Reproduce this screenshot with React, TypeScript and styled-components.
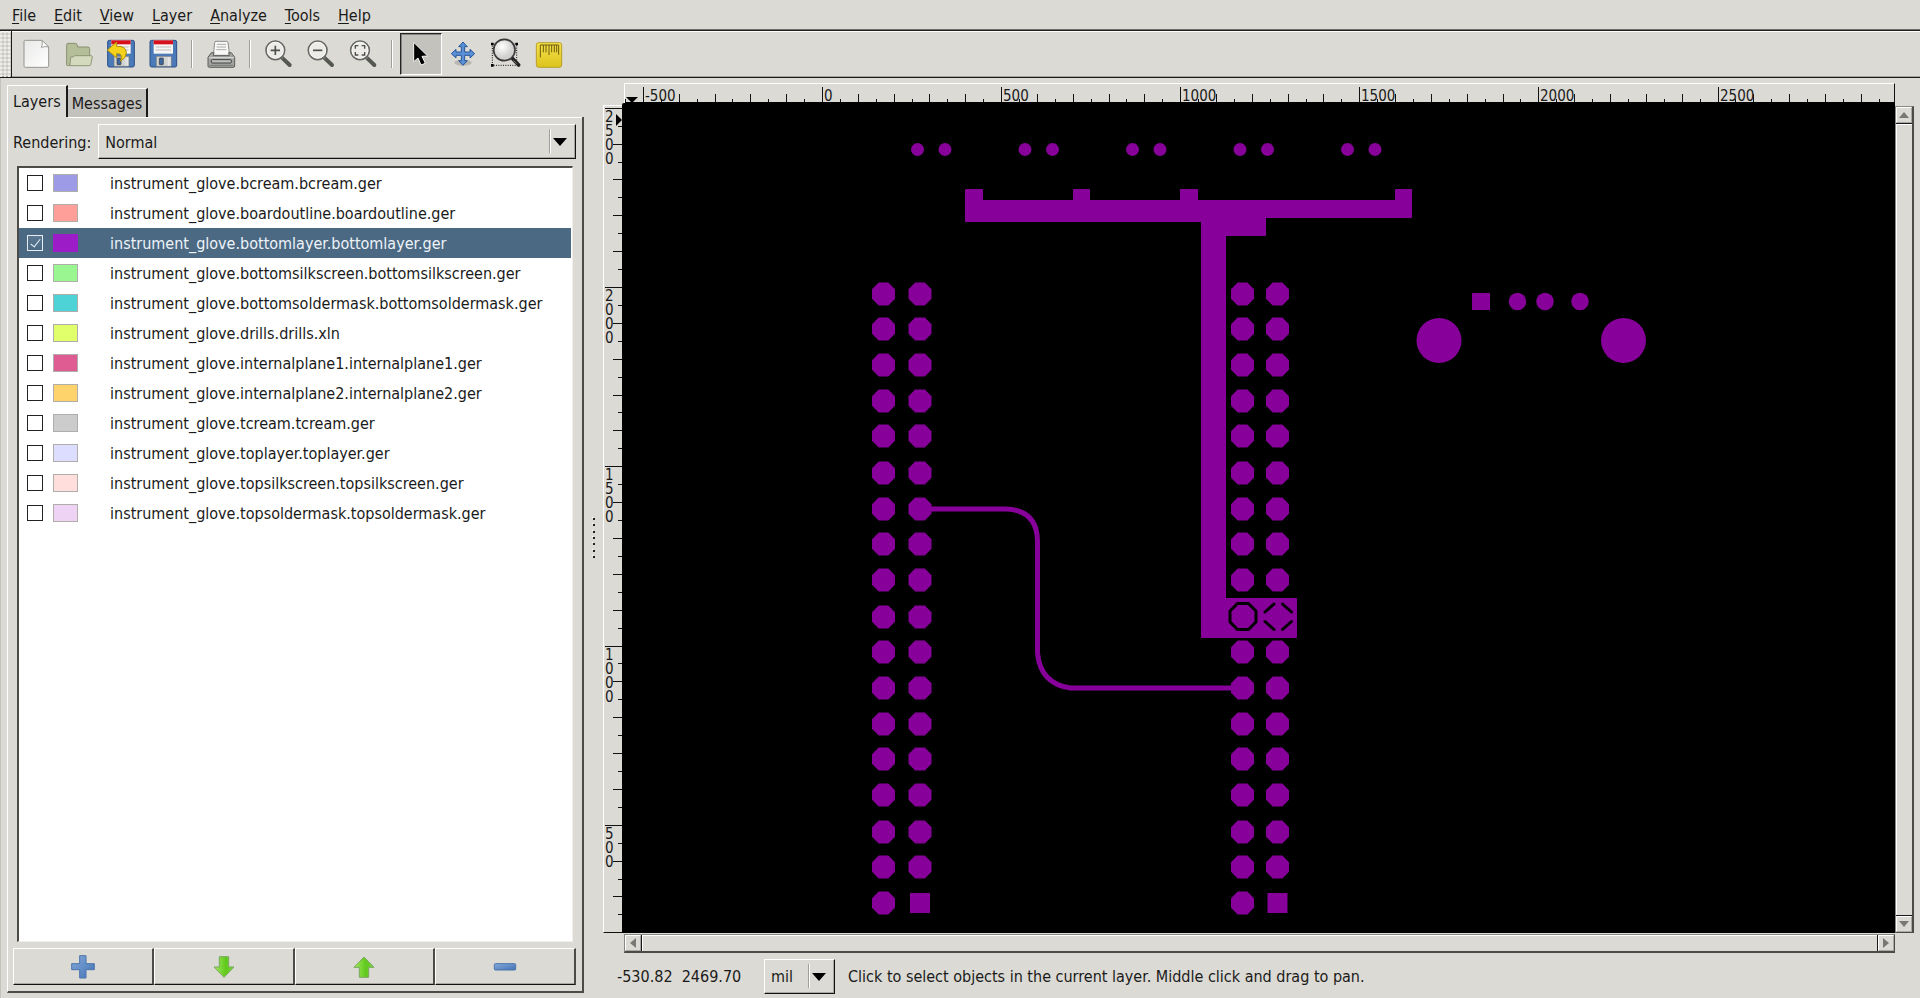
import React, { useState } from "react";
import styled, { createGlobalStyle, css } from "styled-components";

const face = "#dcdad5";
const shade = "#c4c2bd";
const edge = "#4c4b48";
const copper = "#860099";

const GlobalStyle = createGlobalStyle`
  * { box-sizing: border-box; }
  body {
    margin: 0;
    background: ${face};
    color: #1a1a1a;
    font: 16px/20px "DejaVu Sans Condensed", "DejaVu Sans", sans-serif;
  }
  button, select, input { font: inherit; color: inherit; margin: 0; padding: 0; }
`;

const raised = css`
  border: 1px solid;
  border-color: #fff #111 #111 #fff;
  box-shadow: inset -1px -1px 0 #a9a7a2;
  background: ${face};
`;

const Window = styled.div`
  display: flex;
  flex-direction: column;
  min-height: 100vh;
`;

const MenuBar = styled.nav`
  display: flex;
  height: 30px;
  padding: 2px 3px 0;
  align-items: center;
  border-bottom: 1px solid #6e6c69;
`;

const MenuItem = styled.button`
  border: 0;
  background: none;
  padding: 0 9px;
  span { text-decoration: underline; text-underline-offset: 2px; }
`;

const ToolBar = styled.div`
  display: flex;
  height: 48px;
  border-top: 1px solid #22211f;
  border-bottom: 1px solid #1a1a1a;
  box-shadow: inset 0 1px 0 #fff, inset 0 -1px 0 #a5a39e;
  align-items: center;
`;

const Handle = styled.div`
  width: 12px;
  align-self: stretch;
  margin-right: 4px;
  border-right: 1px solid #1a1a1a;
  background-image: radial-gradient(circle at 1px 1px, #efeeec 1px, transparent 1px),
    radial-gradient(circle at 3px 3px, #cbc9c4 1px, transparent 1px);
  background-size: 4px 4px;
`;

const ToolButton = styled.button<{ $pressed?: boolean }>`
  width: 42px;
  height: 42px;
  border: 1px solid transparent;
  background: none;
  ${(p) =>
    p.$pressed &&
    css`
      background: ${shade};
      border: 1px solid;
      border-color: #222 #fff #fff #222;
      box-shadow: inset 1px 1px 0 #85837f;
    `}
  svg { display: block; margin: -1px; width: 42px; height: 42px; }
`;

const ToolGap = styled.div`
  width: 16px;
  height: 28px;
  display: flex;
  justify-content: center;
  &::before {
    content: "";
    width: 2px;
    background: linear-gradient(90deg, #a19f9a 50%, #fff 50%);
  }
`;

const Main = styled.main`
  display: flex;
  flex: 1;
`;

const Sidebar = styled.section`
  display: flex;
  flex-direction: column;
  width: 584px;
  flex: none;
  padding: 7px 0 5px 6px;
  border-left: 1px solid ${shade};
`;

const Tabs = styled.div`
  display: flex;
  height: 32px;
  align-items: flex-end;
`;

const Tab = styled.button<{ $active?: boolean }>`
  border: 0;
  border-top: 1px solid #fff;
  border-right: 2px solid #1a1a1a;
  height: 29px;
  padding: 2px 4px 0;
  background: ${shade};
  ${(p) =>
    p.$active &&
    css`
      height: 32px;
      padding: 0 5px;
      border-left: 1px solid #fff;
      background: ${face};
    `}
`;

const Page = styled.div`
  flex: 1;
  display: flex;
  flex-direction: column;
  padding: 7px 6px 6px 5px;
  border-left: 1px solid #fff;
  border-right: 2px solid ${edge};
  border-bottom: 2px solid ${edge};
  background: linear-gradient(#fff, #fff) no-repeat right top / calc(100% - 60px) 1px;
`;

const RenderRow = styled.div`
  display: flex;
  align-items: center;
  gap: 7px;
  label { padding-top: 2px; }
`;

const ComboFrame = styled.div<{ $wide?: boolean }>`
  ${raised}
  position: relative;
  display: flex;
  height: 35px;
  ${(p) => (p.$wide ? "flex: 1;" : "width: 71px;")}
  &::before {
    content: "";
    position: absolute;
    right: 24px;
    top: 4px;
    bottom: 5px;
    width: 2px;
    background: linear-gradient(90deg, #a19f9a 50%, #fff 50%);
  }
  &::after {
    content: "";
    position: absolute;
    right: 8px;
    top: 13px;
    border: 7px solid transparent;
    border-top: 8px solid #000;
    border-bottom: 0;
    pointer-events: none;
  }
`;

const Combo = styled.select`
  appearance: none;
  flex: 1;
  min-width: 0;
  border: 0;
  background: transparent;
  padding: 2px 0 0 6px;
  outline: none;
`;

const LayerList = styled.ul`
  list-style: none;
  flex: 1;
  margin: 7px 3px 6px 4px;
  padding: 0 1px 0 0;
  background: #fff;
  border-top: 2px solid ${edge};
  border-left: 2px solid ${edge};
  border-bottom: 1px solid #efeeeb;
  border-right: 1px solid #efeeeb;
`;

const LayerRow = styled.li<{ $selected?: boolean }>`
  height: 30px;
  background: ${(p) => (p.$selected ? "#4b6983" : "#fff")};
  color: ${(p) => (p.$selected ? "#eef3f8" : "#1a1a1a")};
  label {
    display: grid;
    grid-template-columns: 16px 25px 1fr;
    align-items: center;
    height: 30px;
    padding-left: 8px;
    column-gap: 10px;
  }
  span { padding: 2px 0 0 22px; }
`;

const Check = styled.input`
  appearance: none;
  width: 16px;
  height: 16px;
  border: 1px solid #222;
  background: #fff;
  &:checked {
    border-color: #e6edf4;
    background: linear-gradient(#5b7791, #4b6983);
  }
  &:checked::after {
    content: "";
    display: block;
    width: 4px;
    height: 9px;
    margin: 1px 0 0 5px;
    border: solid #e6edf4;
    border-width: 0 1px 1px 0;
    transform: rotate(38deg);
  }
`;

const Swatch = styled.i<{ $color: string; $bare?: boolean }>`
  height: 18px;
  border: 1px solid ${(p) => (p.$bare ? p.$color : "#b0aeab")};
  background: ${(p) => p.$color};
`;

const LayerActions = styled.div`
  display: grid;
  grid-template-columns: repeat(4, 1fr);
`;

const ActionButton = styled.button`
  display: grid;
  place-items: center;
  height: 37px;
  border: 1px solid;
  border-color: #fff ${edge} #111 #fff;
  border-right-width: 2px;
  background: ${face};
  box-shadow: inset 0 -1px 0 #a9a7a2;
`;

const Divider = styled.div`
  width: 19px;
  flex: none;
  display: flex;
  align-items: center;
  justify-content: center;
`;

const Workspace = styled.section`
  flex: 1;
  min-width: 0;
  display: grid;
  grid-template-columns: 19px minmax(0, 1fr) 19px;
  grid-template-rows: 20px minmax(0, 1fr) 20px 45px;
  padding: 5px 6px 0 0;
`;

const TopRuler = styled.svg`
  grid-column: 2;
  width: calc(100% - 2px);
  height: 20px;
  margin-left: 2px;
  border: 0 solid;
  border-width: 1px 1px 0 1px;
  border-color: #fff #111 #fff #fff;
`;

const SideRuler = styled.svg`
  grid-column: 1;
  width: 19px;
  height: calc(100% - 2px);
  margin-top: 2px;
  border: 1px solid;
  border-width: 1px 0 1px 1px;
  border-color: #fff #fff #111 #fff;
`;

const Board = styled.svg`
  width: 100%;
  height: 100%;
  background: #000;
  border-radius: 2px 0 0 0;
`;

const Scroll = styled.div<{ $across?: boolean }>`
  display: flex;
  flex-direction: ${(p) => (p.$across ? "row" : "column")};
  ${(p) => (p.$across ? "grid-column: 2; margin: 1px 0 0 2px;" : "margin-top: 3px;")}
  border: 1px solid;
  border-color: #8a8884 ${edge} ${edge} #8a8884;
  ${(p) => (p.$across ? "border-bottom-width: 2px;" : "border-right-width: 2px;")}
`;

const Stepper = styled.button`
  flex: none;
  width: 16px;
  height: 16px;
  border: 1px solid;
  border-color: #fff #a9a7a2 #a9a7a2 #fff;
  background: ${face};
  display: grid;
  place-items: center;
`;

const Thumb = styled.div<{ $across?: boolean }>`
  flex: 1;
  background: ${face};
  border: solid;
  border-color: #1a1a1a;
  border-width: ${(p) => (p.$across ? "0 1px" : "1px 0")};
  box-shadow: inset 1px 1px 0 #fff;
`;

const StatusBar = styled.footer`
  grid-column: 1 / -1;
  display: flex;
  align-items: center;
  padding: 1px 0 0 14px;
  white-space: pre;
  output { width: 147px; padding-top: 2px; }
  p { margin: 0 0 0 13px; padding-top: 2px; }
`;

type IconName =
  | "new" | "open" | "revert" | "save" | "print" | "in" | "out" | "fit"
  | "pointer" | "pan" | "zoomrect" | "measure";

const iconOrigin: Record<IconName, number> = {
  new: 48, open: 174, revert: 300, save: 426, print: 600, in: 774,
  out: 0, fit: 126, pointer: 300, pan: 426, zoomrect: 552, measure: 678,
};

const Floppy = ({ x }: { x: number }) => (
  <g transform={`translate(${x} 0)`}>
    <rect x="1" y="31" width="80" height="80" rx="5" fill="#4a7ab8" stroke="#2a4f86" strokeWidth="3" />
    <rect x="12" y="31" width="58" height="40" fill="#f6f6f4" />
    <rect x="12" y="31" width="58" height="12" fill="#d8101c" />
    <path d="M18 51h46M18 60h46" stroke="#bdbdbd" strokeWidth="3" />
    <rect x="20" y="79" width="45" height="30" rx="2" fill="#d2d4d2" stroke="#73777a" strokeWidth="2" />
    <rect x="29" y="84" width="12" height="20" rx="2" fill="#3d67a0" stroke="#333" strokeWidth="2" />
    <path d="M56 82v26M61 82v26" stroke="#f5f5f5" strokeWidth="2" />
  </g>
);

const Lens = ({ x, children }: { x: number; children: React.ReactNode }) => (
  <g transform={`translate(${x} 0)`}>
    <path d="M50 82l24 23" stroke="#555753" strokeWidth="12" strokeLinecap="round" />
    <path d="M42 74l12 12" stroke="#777975" strokeWidth="6" />
    <circle cx="31" cy="61" r="28" fill="#ecebe8" stroke="#666864" strokeWidth="5" />
    <circle cx="31" cy="61" r="24" fill="none" stroke="#fff" strokeWidth="2" />
    <g fill="none" stroke="#4d4f4c" strokeWidth="5">{children}</g>
  </g>
);

const iconArt: Record<IconName, React.ReactNode> = {
  new: (
    <>
      <path d="M76 31h50l20 20v56q0 5-5 5H76q-4 0-4-5V35q0-4 4-4z" fill="url(#paper)" stroke="#94948f" strokeWidth="3" />
      <path d="M126 31q3 12-2 21 12-4 22-1z" fill="#fff" stroke="#9c9c98" strokeWidth="3" />
    </>
  ),
  open: (
    <>
      <path d="M200 105V44q0-4 4-4h22q4 0 5 4l2 7h31q5 0 5 5v49z" fill="#b4bf9a" stroke="#87906f" strokeWidth="3" />
      <path d="M210 105l2-24q8 2 12-4h50q3 0 3 4l-5 24q-1 2-4 2h-64q-5 0-5-5" fill="#d3dabd" stroke="#8e9776" strokeWidth="3" />
    </>
  ),
  revert: (
    <>
      <Floppy x={322} />
      <path d="M322 60l28-24v13q29-2 29 20 0 15-18 25 5-11 2-18-3-6-13-5v13z" fill="#f3d21c" stroke="#b08c08" strokeWidth="3" strokeLinejoin="round" />
    </>
  ),
  save: <Floppy x={449} />,
  print: (
    <>
      <path d="M640 76l4-38q0-4 4-4h32q4 0 4 4l5 38z" fill="#f8f8f7" stroke="#8b8b88" strokeWidth="3" />
      <path d="M651 43h27M650 51h28M649 59h30" stroke="#aaa" strokeWidth="3" />
      <path d="M634 68h8l-2 9h48l-2-9h8l10 14v26q0 4-4 4h-72q-4 0-4-4V82z" fill="#a3a4a1" stroke="#5c5e5b" strokeWidth="3" />
      <path d="M627 83h75" stroke="#d3d4d1" strokeWidth="4" />
      <rect x="634" y="89" width="60" height="10" rx="3" fill="#c0c1be" stroke="#3f413e" strokeWidth="3" />
      <path d="M628 106h72" stroke="#7a7c79" strokeWidth="3" />
    </>
  ),
  in: <Lens x={795}><path d="M17 61h28M31 47v28" /></Lens>,
  out: <Lens x={22}><path d="M17 61h28" /></Lens>,
  fit: <Lens x={149}><path d="M17 56v-9h9M36 47h9v9M45 66v9h-9M26 75h-9v-9" strokeWidth="4" /></Lens>,
  pointer: <path d="M341 37v58l13-11 9 21 13-5-10-21 17-1z" fill="#000" stroke="#f5f5f5" strokeWidth="3" />,
  pan: (
    <>
      <ellipse cx="489" cy="98" rx="26" ry="9" fill="#aaa8a3" opacity=".7" />
      <path d="M489 36l13 14h-8v16h16v-8l14 13-14 13v-8h-16v16h8l-13 14-13-14h8V76h-16v8l-14-13 14-13v8h16V50h-8z" fill="#5b8fd6" stroke="#27579a" strokeWidth="3" strokeLinejoin="round" />
    </>
  ),
  zoomrect: (
    <>
      <path d="M577 42h73v64h-73z" fill="none" stroke="#111" strokeWidth="3" strokeDasharray="3 4" />
      <path d="M573 38h8v8h-8zM646 38h8v8h-8zM573 102h8v8h-8z" fill="#000" />
      <path d="M636 84l20 21" stroke="#222" strokeWidth="11" strokeLinecap="round" />
      <circle cx="613" cy="60" r="32" fill="url(#glass)" stroke="#3a3a3a" strokeWidth="5" />
      <path d="M640 91l10 10" stroke="#aaa" strokeWidth="2" />
    </>
  ),
  measure: (
    <>
      <rect x="709" y="38" width="76" height="74" rx="7" fill="url(#gold)" stroke="#b8a128" strokeWidth="3" />
      <path d="M721 82V45h55v29M730 45v22M738 45v22M747 45v30M755 45v22M763 45v22M770 45v22" fill="none" stroke="#6d5c0c" strokeWidth="3" />
    </>
  ),
};

const Icon = ({ name }: { name: IconName }) => (
  <svg viewBox={`${iconOrigin[name]} 9 126 126`} aria-hidden="true">{iconArt[name]}</svg>
);

const Definitions = styled.svg`
  position: absolute;
`;

const Gradients = () => (
  <Definitions width="0" height="0" aria-hidden="true">
    <defs>
      <linearGradient id="paper" x1="0" y1="0" x2="1" y2="1">
        <stop offset="0" stopColor="#e9e9e8" /><stop offset="1" stopColor="#fff" />
      </linearGradient>
      <radialGradient id="glass" cx=".4" cy=".35">
        <stop offset="0" stopColor="#fff" /><stop offset="1" stopColor="#d0d0ce" />
      </radialGradient>
      <linearGradient id="gold" x1="0" y1="0" x2="0" y2="1">
        <stop offset="0" stopColor="#f5e14c" /><stop offset="1" stopColor="#dcc31c" />
      </linearGradient>
      <linearGradient id="blue" x1="0" y1="0" x2="1" y2="1">
        <stop offset="0" stopColor="#86aada" /><stop offset="1" stopColor="#4272b4" />
      </linearGradient>
      <linearGradient id="green" x1="0" y1="0" x2="1" y2="0">
        <stop offset="0" stopColor="#a5ec5c" /><stop offset=".6" stopColor="#5fc81c" /><stop offset="1" stopColor="#7fd840" />
      </linearGradient>
    </defs>
  </Definitions>
);

const menus: [string, string][] = [
  ["F", "ile"], ["E", "dit"], ["V", "iew"], ["L", "ayer"], ["A", "nalyze"], ["T", "ools"], ["H", "elp"],
];

const tools: ([IconName, string] | null)[] = [
  ["new", "New"], ["open", "Open"], ["revert", "Revert"], ["save", "Save"], null,
  ["print", "Print"], null,
  ["in", "Zoom in"], ["out", "Zoom out"], ["fit", "Zoom to fit"], null,
  ["pointer", "Pointer"], ["pan", "Pan"], ["zoomrect", "Zoom area"], ["measure", "Measure"],
];

const layers: [string, string][] = [
  ["instrument_glove.bcream.bcream.ger", "#9d9be6"],
  ["instrument_glove.boardoutline.boardoutline.ger", "#ff9f99"],
  ["instrument_glove.bottomlayer.bottomlayer.ger", "#9c1cc8"],
  ["instrument_glove.bottomsilkscreen.bottomsilkscreen.ger", "#99f690"],
  ["instrument_glove.bottomsoldermask.bottomsoldermask.ger", "#4dd3d5"],
  ["instrument_glove.drills.drills.xln", "#e0ff6a"],
  ["instrument_glove.internalplane1.internalplane1.ger", "#de5c92"],
  ["instrument_glove.internalplane2.internalplane2.ger", "#ffd36c"],
  ["instrument_glove.tcream.tcream.ger", "#cccccc"],
  ["instrument_glove.toplayer.toplayer.ger", "#dddeff"],
  ["instrument_glove.topsilkscreen.topsilkscreen.ger", "#ffdedb"],
  ["instrument_glove.topsoldermask.topsoldermask.ger", "#eed3f5"],
];
const currentLayer = 2;

/* Rulers: a tick for each 50 mil, taller at 100 and full height with a label at 500. */
const tickSize = (v: number, full: number) => (v % 500 === 0 ? full : v % 100 === 0 ? 9 : 4);
const acrossMarks = Array.from({ length: 71 }, (_, i) => -550 + i * 50);
const downMarks = Array.from({ length: 46 }, (_, i) => 2500 - i * 50);

const HorizontalRuler = () => (
  <TopRuler>
    {acrossMarks.map((v) => {
      const x = Math.round(197 + v * 0.3582);
      const size = tickSize(v, 16);
      return <rect key={v} x={x} y={19 - size} width="1" height={size} fill="#111" />;
    })}
    {acrossMarks.filter((v) => v % 500 === 0 && v <= 2500).map((v) => (
      <text key={v} x={Math.round(199 + v * 0.3582)} y="17" fontSize="15" fill="#1a1a1a">{v}</text>
    ))}
    <path d="M1 13h12l-6 6z" />
    <rect y="18" width="100%" height="1" />
  </TopRuler>
);

const VerticalRuler = () => (
  <SideRuler>
    {downMarks.map((v) => {
      const size = tickSize(v, 17);
      return <rect key={v} x={18 - size} y={Math.round(898 - v * 0.3585)} width={size} height="1" fill="#111" />;
    })}
    {downMarks.filter((v) => v % 500 === 0).map((v) => (
      <g key={v} fontSize="15" fill="#1a1a1a">
        {String(v).split("").map((d, i) => (
          <text key={i} x="1" y={Math.round(898 - v * 0.3585) + 14 + i * 14}>{d}</text>
        ))}
      </g>
    ))}
    <path d="M12 8v12l6-6z" />
  </SideRuler>
);

const Octagon = ({ x, y, r }: { x: number; y: number; r: number }) => {
  const k = r * 0.42;
  return <path d={`M${x - k} ${y - r}h${2 * k}L${x + r} ${y - k}v${2 * k}L${x + k} ${y + r}h${-2 * k}L${x - r} ${y + k}v${-2 * k}z`} />;
};

const padRows = [294, 329, 365, 401, 436, 473, 509, 544, 580, 617, 652, 688, 724, 759, 795, 832, 867, 903];
const padColumns = [883.5, 920, 1242.5, 1277.5];

const BoardView = () => (
  <Board role="img" aria-label="Bottom copper layer">
    <g transform="translate(-622 -103)" fill={copper}>
      {padColumns.map((x, c) =>
        padRows.map((y, r) => {
          if (c > 1 && r === 9) return null;
          return c % 2 === 1 && r === 17
            ? <rect key={`${c}-${r}`} x={x - 10} y={y - 10} width="20" height="20" />
            : <Octagon key={`${c}-${r}`} x={x} y={y} r={11.5} />;
        })
      )}
      {[917.5, 945, 1025, 1052.5, 1132.5, 1160, 1240, 1267.5, 1347.5, 1375].map((x) => (
        <circle key={x} cx={x} cy="149.5" r="6.5" />
      ))}
      <path
        d="M966 190H982V201H1074V190H1089V201H1181V190H1197V201H1396V190H1411V217H1265V235H1225V599H1296V637H1202V221H966z"
        stroke={copper}
        strokeWidth="2"
        strokeLinejoin="round"
      />
      <path d="M920 509h86q31 1 31.500 32v112q3 31 33 35h172" fill="none" stroke={copper} strokeWidth="5" />
      <rect x="1472" y="293" width="18" height="17" />
      {[1517.5, 1545, 1580].map((x) => <circle key={x} cx={x} cy="301.5" r="8.75" />)}
      <circle cx="1439" cy="340.5" r="22.5" />
      <circle cx="1623.5" cy="340.5" r="22.5" />
      <g stroke="#000" strokeWidth="3" strokeLinecap="round">
        <Octagon x={1243} y={616.5} r={13} />
        <path d="M1265 612l9-8M1282.500 604l9 8M1265 621.500l9 8M1282.500 629.500l9-8" />
      </g>
    </g>
  </Board>
);

const Arrow = ({ d }: { d: string }) => (
  <svg width="10" height="10" viewBox="0 0 10 10" aria-hidden="true"><path d={d} fill="#7a7874" /></svg>
);

export default function App() {
  const [shown, setShown] = useState(() => layers.map((_, i) => i === currentLayer));
  const toggle = (i: number) => setShown((s) => s.map((v, k) => (k === i ? !v : v)));

  return (
    <Window>
      <GlobalStyle />
      <Gradients />
      <MenuBar>
        {menus.map(([key, rest]) => (
          <MenuItem key={key}><span>{key}</span>{rest}</MenuItem>
        ))}
      </MenuBar>
      <ToolBar role="toolbar">
        <Handle />
        {tools.map((tool, i) =>
          tool ? (
            <ToolButton key={i} aria-label={tool[1]} $pressed={tool[0] === "pointer"}>
              <Icon name={tool[0]} />
            </ToolButton>
          ) : (
            <ToolGap key={i} />
          )
        )}
      </ToolBar>
      <Main>
        <Sidebar>
          <Tabs role="tablist">
            <Tab role="tab" aria-selected="true" $active>Layers</Tab>
            <Tab role="tab" aria-selected="false">Messages</Tab>
          </Tabs>
          <Page>
            <RenderRow>
              <label htmlFor="rendering">Rendering:</label>
              <ComboFrame $wide>
                <Combo id="rendering"><option>Normal</option></Combo>
              </ComboFrame>
            </RenderRow>
            <LayerList>
              {layers.map(([name, color], i) => (
                <LayerRow key={name} $selected={i === currentLayer}>
                  <label>
                    <Check type="checkbox" checked={shown[i]} onChange={() => toggle(i)} />
                    <Swatch $color={color} $bare={i === currentLayer} />
                    <span>{name}</span>
                  </label>
                </LayerRow>
              ))}
            </LayerList>
            <LayerActions>
              <ActionButton aria-label="Add layer">
                <svg width="26" height="26" viewBox="0 0 78 78">
                  <path d="M29 5h19v24h25v18H48v25H29V47H5V29h24z" fill="url(#blue)" stroke="#4a75ae" strokeWidth="3" strokeLinejoin="round" />
                </svg>
              </ActionButton>
              <ActionButton aria-label="Move layer down">
                <svg width="26" height="26" viewBox="0 0 78 78">
                  <path d="M25 8h28v31h16L39 70 9 39h16z" fill="url(#green)" stroke="#7aa860" strokeWidth="3" strokeLinejoin="round" />
                </svg>
              </ActionButton>
              <ActionButton aria-label="Move layer up">
                <svg width="26" height="26" viewBox="0 0 78 78">
                  <path d="M25 70h28V40h16L39 9 9 40h16z" fill="url(#green)" stroke="#7aa860" strokeWidth="3" strokeLinejoin="round" />
                </svg>
              </ActionButton>
              <ActionButton aria-label="Remove layer">
                <svg width="26" height="26" viewBox="0 0 78 78">
                  <rect x="7" y="29" width="64" height="19" rx="3" fill="url(#blue)" stroke="#4a75ae" strokeWidth="3" />
                </svg>
              </ActionButton>
            </LayerActions>
          </Page>
        </Sidebar>
        <Divider>
          <svg width="4" height="42" aria-hidden="true">
            {[0, 1, 2, 3, 4, 5, 6].map((i) => (
              <g key={i}>
                <rect x="1" y={1 + Math.round(i * 6.33)} width="2" height="2" fill="#222" />
                <rect x="0" y={Math.round(i * 6.33)} width="1" height="1" fill="#fff" />
              </g>
            ))}
          </svg>
        </Divider>
        <Workspace>
          <HorizontalRuler />
          <VerticalRuler />
          <BoardView />
          <Scroll>
            <Stepper aria-label="Scroll up"><Arrow d="M5 2l5 6H0z" /></Stepper>
            <Thumb />
            <Stepper aria-label="Scroll down"><Arrow d="M5 8l5-6H0z" /></Stepper>
          </Scroll>
          <Scroll $across>
            <Stepper aria-label="Scroll left"><Arrow d="M2 5l6-5v10z" /></Stepper>
            <Thumb $across />
            <Stepper aria-label="Scroll right"><Arrow d="M8 5L2 0v10z" /></Stepper>
          </Scroll>
          <StatusBar>
            <output>-530.82  2469.70</output>
            <ComboFrame>
              <Combo aria-label="Units"><option>mil</option></Combo>
            </ComboFrame>
            <p>Click to select objects in the current layer. Middle click and drag to pan.</p>
          </StatusBar>
        </Workspace>
      </Main>
    </Window>
  );
}
